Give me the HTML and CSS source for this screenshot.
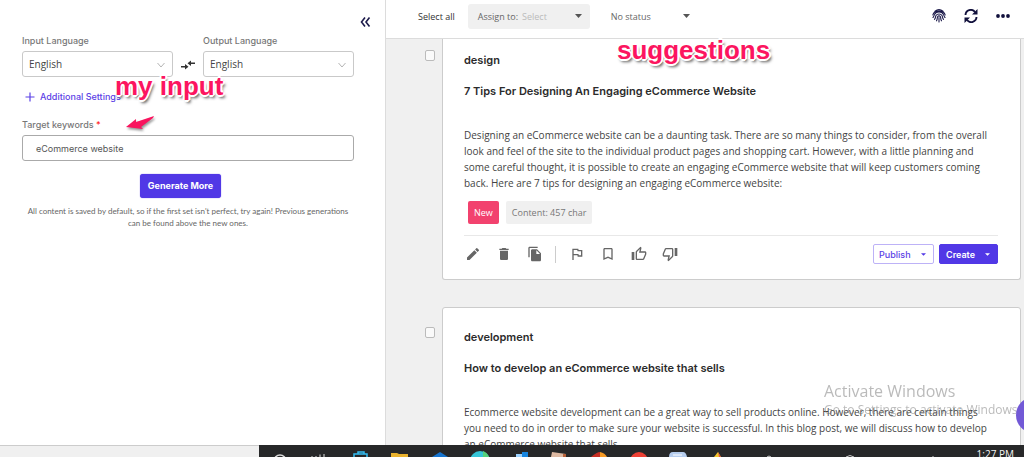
FILE: index.html
```html
<!DOCTYPE html>
<html lang="en">
<head>
<meta charset="utf-8">
<title>Content generator</title>
<link rel="stylesheet" href="styles.css">
</head>
<body>
<div class="screen">
  <div class="app">
    <aside class="sidebar">
      <button class="icon-btn collapse" aria-label="Collapse panel">
        <svg width="12" height="12" viewBox="0 0 12 12" fill="none" stroke="#1d1b4b" stroke-width="1.6"><path d="M6 1.500 2.500 6 6 10.500M10.500 1.500 7 6l3.500 4.500"/></svg>
      </button>
      <form class="form">
        <div class="languages">
          <div class="field">
            <label for="in-lang">Input Language</label>
            <div class="select-box">
              <select id="in-lang"><option>English</option></select>
              <svg class="chevron" width="10" height="6" viewBox="0 0 10 6" fill="none" stroke="#b5b5b5"><path d="m1.500 1 3.500 4 3.500-4"/></svg>
            </div>
          </div>
          <svg class="swap" width="14" height="10" viewBox="0 0 14 10"><path d="M0 6h4V4l3.500 2.750L4 9.500V7.500H0zM14 2.500h-4V.5L6.500 3.250 10 6V4h4z" fill="#333"/></svg>
          <div class="field">
            <label for="out-lang">Output Language</label>
            <div class="select-box">
              <select id="out-lang"><option>English</option></select>
              <svg class="chevron" width="10" height="6" viewBox="0 0 10 6" fill="none" stroke="#b5b5b5"><path d="m1.500 1 3.500 4 3.500-4"/></svg>
            </div>
          </div>
        </div>
        <button type="button" class="additional">
          <svg width="10" height="10" viewBox="0 0 10 10" stroke="#5b41e6" stroke-width="1.200"><path d="M5 .5v9M.5 5h9"/></svg>
          Additional Settings
        </button>
        <label for="keywords">Target keywords <span class="required">*</span></label>
        <input class="keywords" id="keywords" type="text" value="eCommerce website">
        <button type="button" class="generate">Generate More</button>
        <p class="hint">All content is saved by default, so if the first set isn't perfect, try again! Previous generations<br>can be found above the new ones.</p>
      </form>
    </aside>

    <main class="results">
      <header class="toolbar">
        <button class="select-all">Select all</button>
        <div class="assign">
          <label for="assign">Assign to:</label>
          <select id="assign"><option>Select</option></select>
          <svg class="caret" width="7" height="4" viewBox="0 0 7 4"><path d="M0 0h7L3.500 4z" fill="#555"/></svg>
        </div>
        <div class="status">
          <select aria-label="Status"><option>No status</option></select>
          <svg class="caret" width="7" height="4" viewBox="0 0 7 4"><path d="M0 0h7L3.500 4z" fill="#555"/></svg>
        </div>
        <div class="toolbar-icons">
          <button class="icon-btn" aria-label="Fingerprint">
            <svg width="14" height="14" viewBox="0 0 14 14" fill="none" stroke="#1d1b4b" stroke-width="1.100" stroke-linecap="round"><path d="M3 2.200a6.500 6.500 0 0 1 8 0M.8 6C2 .8 12 .8 13.200 6M1 8.500C2 7.500 1.900 6.500 2.500 5.500c1.700-3.300 7.300-3.300 9 0 .6 1 .5 2 1.500 3M2.500 10.300C4 8.500 3.200 7.700 4 6.500c1.300-2 4.700-2 6 0 .8 1.200 0 2 1.500 3.800M4.500 11.800C5.600 10 5 8.500 5.700 7.500c.6-.8 2-.8 2.600 0 .7 1 .1 2.500 1.200 4.300M7 8.500v4.500"/></svg>
          </button>
          <button class="icon-btn" aria-label="Refresh">
            <svg width="14" height="14" viewBox="0 0 14 14"><path d="M1.500 6A5.300 5.300 0 0 1 11 3M12.500 8A5.300 5.300 0 0 1 3 11" fill="none" stroke="#11103c" stroke-width="1.900"/><path d="M13.500 0v5.500H8zM.5 14V8.500H6z" fill="#11103c"/></svg>
          </button>
          <button class="icon-btn" aria-label="More">
            <svg width="14" height="4" viewBox="0 0 14 4" fill="#11103c"><circle cx="2" cy="2" r="1.900"/><circle cx="7" cy="2" r="1.900"/><circle cx="12" cy="2" r="1.900"/></svg>
          </button>
        </div>
      </header>

      <div class="list">
        <div class="item first">
          <input type="checkbox" aria-label="Select design">
          <article class="card">
            <h2>design</h2>
            <h3>7 Tips For Designing An Engaging eCommerce Website</h3>
            <p>Designing an eCommerce website can be a daunting task. There are so many things to consider, from the overall<br>look and feel of the site to the individual product pages and shopping cart. However, with a little planning and<br>some careful thought, it is possible to create an engaging eCommerce website that will keep customers coming<br>back. Here are 7 tips for designing an engaging eCommerce website:</p>
            <div class="tags"><span class="tag new">New</span><span class="tag">Content: 457 char</span></div>
            <footer class="actions">
              <button class="icon-btn" aria-label="Edit"><svg width="16" height="16" viewBox="0 0 24 24"><path d="M3 17.250V21h3.750L17.810 9.940l-3.750-3.750L3 17.250zM20.710 7.040a1 1 0 0 0 0-1.410l-2.340-2.340a1 1 0 0 0-1.410 0l-1.830 1.830 3.750 3.750 1.830-1.830z"/></svg></button>
              <button class="icon-btn" aria-label="Delete"><svg width="16" height="16" viewBox="0 0 24 24"><path d="M6 19c0 1.100.9 2 2 2h8c1.100 0 2-.9 2-2V7H6v12zM19 4h-3.500l-1-1h-5l-1 1H5v2h14V4z"/></svg></button>
              <button class="icon-btn" aria-label="Copy"><svg width="16" height="16" viewBox="0 0 24 24"><path d="M16 1H4c-1.100 0-2 .9-2 2v14h2V3h12V1zm-1 4 6 6v10c0 1.100-.9 2-2 2H7.990C6.890 23 6 22.100 6 21V7c0-1.100.89-2 1.990-2H15zm-1 7h5.500L14 6.500V12z"/></svg></button>
              <span class="divider"></span>
              <button class="icon-btn" aria-label="Flag"><svg width="16" height="16" viewBox="0 0 24 24"><path d="m12.360 6 .4 2H18v6h-3.360l-.4-2H7V6h5.360M14 4H5v17h2v-7h5.600l.4 2h7V6h-5.600L14 4z"/></svg></button>
              <button class="icon-btn" aria-label="Bookmark"><svg width="16" height="16" viewBox="0 0 24 24"><path d="M17 3H7c-1.100 0-2 .9-2 2v16l7-3 7 3V5c0-1.100-.9-2-2-2zm0 15-5-2.180L7 18V5h10v13z"/></svg></button>
              <button class="icon-btn" aria-label="Like"><svg width="16" height="16" viewBox="0 0 24 24"><path d="M9 21h9c.83 0 1.540-.5 1.840-1.220l3.020-7.050c.09-.23.14-.47.14-.73v-2c0-1.100-.9-2-2-2h-6.310l.95-4.570.03-.32c0-.41-.17-.79-.44-1.060L14.170 1 7.580 7.590C7.220 7.950 7 8.450 7 9v10c0 1.100.9 2 2 2zM9 9l4.340-4.340L12 10h9v2l-3 7H9V9zM1 9h4v12H1z"/></svg></button>
              <button class="icon-btn" aria-label="Dislike"><svg width="16" height="16" viewBox="0 0 24 24"><path d="M15 3H6c-.83 0-1.540.5-1.840 1.220l-3.020 7.050c-.09.23-.14.47-.14.730v2c0 1.100.9 2 2 2h6.310l-.95 4.570-.03.32c0 .41.17.79.44 1.060L9.830 23l6.590-6.590c.36-.36.58-.86.58-1.410V5c0-1.100-.9-2-2-2zm0 12-4.340 4.340L12 14H3v-2l3-7h9v10zm4-12h4v12h-4z"/></svg></button>
              <button class="menu-btn publish">Publish <svg width="5" height="3" viewBox="0 0 6 3"><path d="M0 0h6L3 3z"/></svg></button>
              <button class="menu-btn create">Create <svg width="5" height="3" viewBox="0 0 6 3"><path d="M0 0h6L3 3z"/></svg></button>
            </footer>
          </article>
        </div>
        <div class="item">
          <input type="checkbox" aria-label="Select development">
          <article class="card">
            <h2>development</h2>
            <h3>How to develop an eCommerce website that sells</h3>
            <p>Ecommerce website development can be a great way to sell products online. However, there are certain things<br>you need to do in order to make sure your website is successful. In this blog post, we will discuss how to develop<br>an eCommerce website that sells.</p>
          </article>
        </div>
      </div>
    </main>
  </div>

  <div class="bottom">
    <div class="taskbar">
      <svg class="task-icons" width="500" height="12" viewBox="0 0 500 12">
        <circle cx="21" cy="16" r="6" fill="none" stroke="#ddd" stroke-width="1.500"/>
        <path d="M53 12v-1M57 12v-1M61 12V9.500M65 12V9" stroke="#ddd"/>
        <path d="M95 12V9h13v3M99 9V7h6v2" fill="none" stroke="#35bdf2" stroke-width="1.500"/>
        <path d="M132 12V8h6l2 1h9v3z" fill="#eab22d"/>
        <path d="m173 12 8-5 8 5z" fill="#1674cf"/>
        <circle cx="221" cy="16" r="10" fill="#36c5d8"/><path d="M224 6a10 10 0 0 1 6 6h-6z" fill="#55d17b"/>
        <path d="M257 12V9h6V7h6v5z" fill="#1685df"/><path d="M257 12V9h6v3z" fill="#9dd3ff"/>
        <path d="m292 12 1-5 14 2v3z" fill="#ddb9a2"/><path d="m304 9 3 0v3h-3z" fill="#b86138"/>
        <path d="M332 12q6-5 9-5v5z" fill="#c62e22"/><path d="M341 7q5 1 7 5h-7z" fill="#f79a23"/>
        <circle cx="380" cy="16" r="9" fill="#ed4034"/>
        <path d="M410 12q0-5 4-5h10q3 0 4 5z" fill="#b6cdee"/><path d="M414 10h9" stroke="#fff"/>
        <path d="m455 12 4-5 3 5z" fill="#f3c62b"/><path d="m459 7 3 5h-2z" fill="#e35343"/>
      </svg>
      <svg class="tray" width="170" height="12" viewBox="0 0 170 12" fill="none" stroke="#ccc"><path d="M3 12q2-2 4 0M82 12q4-3 8 0M169 12v-1"/></svg>
      <time>1:27 PM</time>
    </div>
  </div>

  <span class="note note-input">my input</span>
  <span class="note note-suggestions">suggestions</span>
  <svg class="arrow" width="32" height="18" viewBox="0 0 32 18"><path d="m2 13 10-8v3l18-6-1 2-12 9 2 2z" fill="#f9155f"/></svg>
  <div class="watermark"><strong>Activate Windows</strong><span>Go to Settings to activate Windows.</span></div>
  <button class="bubble" aria-label="Open chat"></button>
</div>
</body>
</html>
```

FILE: styles.css
```css
* { box-sizing: border-box; }
body { margin: 0; font-family: "Open Sans", "Noto Sans", sans-serif; color: #333; }
button, select, input { font: inherit; color: inherit; margin: 0; }
button { border: 0; background: none; padding: 0; white-space: nowrap; }
svg { display: block; flex: none; }
.screen { position: relative; height: 100vh; overflow: hidden; display: flex; flex-direction: column; }
.app { flex: 1; min-height: 0; display: grid; grid-template-columns: 386fr 638fr; }

.sidebar { border-right: 1px solid #dcdcdc; padding: 16px 14px 0 22px; background: #fff; min-width: 0; }
.icon-btn { display: flex; align-items: center; justify-content: center; }
.collapse { margin-left: auto; }
.form { display: flex; flex-direction: column; padding: 6px 17px 0 0; font-family: Inter, sans-serif; font-size: 9px; line-height: 14px; }
.form label { color: #777; font-weight: 500; }
.languages { display: flex; align-items: flex-end; gap: 8px; }
.field { flex: 1; display: flex; flex-direction: column; gap: 3px; min-width: 0; }
.swap { margin-bottom: 7px; }
.select-box { position: relative; }
.select-box select { width: 100%; height: 26px; padding: 0 6px; appearance: none; background: #fff; border: 1px solid #c9c9c9; border-radius: 3px; font-family: "Open Sans", sans-serif; font-size: 10px; color: #444; }
.chevron { position: absolute; right: 7px; top: 11px; }
.additional { align-self: flex-start; display: flex; align-items: center; gap: 5px; margin: 13px 0 14px 3px; color: #5b41e6; font-weight: 500; }
.required { color: #f22; }
.keywords { width: 100%; height: 26px; margin-top: 3px; padding: 0 13px; border: 1px solid #aaa; border-radius: 3px; color: #555; }
.generate { align-self: center; margin: 13px 15px 0 0; padding: 0 8px; height: 24px; border-radius: 3px; background: #5138e6; color: #fff; font-weight: 700; box-shadow: 0 0 1px #5138e6; }
.hint { margin: 7px 0 0; font-family: Lato, sans-serif; font-size: 8px; line-height: 12px; text-align: center; color: #666; }

.results { display: flex; flex-direction: column; min-width: 0; min-height: 0; background: #f0f0f0; }
.toolbar { flex: none; display: flex; align-items: center; height: 39px; padding: 0 14px 6px 32px; border-bottom: 1px solid #dcdcdc; background: #fff; font-size: 9px; }
.toolbar select { appearance: none; border: 0; background: transparent; padding: 0; flex: 1; min-width: 0; }
.assign { display: flex; align-items: center; gap: 4px; width: 122px; height: 25px; margin-left: 13px; padding: 0 8px 0 10px; background: #f0f0f0; border-radius: 3px; color: #666; }
.assign select { color: #bbb; }
.status { display: flex; align-items: center; width: 79px; margin-left: 21px; color: #666; }
.toolbar-icons { display: flex; align-items: center; gap: 18px; margin-left: auto; }

.list { flex: 1; min-height: 0; overflow: hidden; padding: 0 3px 0 39px; }
.item { display: flex; align-items: flex-start; gap: 7px; margin-bottom: 27px; }
.item input { appearance: none; flex: none; width: 10px; height: 11px; margin-top: 20px; border: 1px solid #bbb; border-radius: 2px; background: #fafafa; }
.first input { margin-top: 11px; }
.card { flex: 1; min-width: 0; padding: 21px 22px 15px 21px; background: #fff; border: 1px solid #ccc; border-radius: 3px; }
.first .card { border-top: 0; border-radius: 0 0 3px 3px; padding-top: 13px; }
.card h2, .card h3 { margin: 0; font: 600 11px/16px Inter, sans-serif; color: #2b2b2b; }
.card h3 { margin-top: 15px; }
.card p { margin: 28px 0 0; font-size: 10px; line-height: 16px; color: #444; white-space: nowrap; }
.tags { display: flex; gap: 7px; margin: 10px 4px 0; }
.tag { padding: 0 6px; font-size: 9px; line-height: 23px; border-radius: 2px; background: #f0f0f0; color: #777; }
.tag.new { background: #f2426e; color: #fff; }
.actions { display: flex; align-items: center; gap: 14px; margin-top: 11px; padding-top: 8px; border-top: 1px solid #e8e8e8; fill: #666; }
.actions .icon-btn { width: 17px; }
.divider { width: 1px; height: 17px; background: #ccc; margin: 0 -2px 0 -2px; }
.menu-btn { display: flex; align-items: center; justify-content: space-between; width: 59px; height: 20px; padding: 0 7px 0 6px; border: 1px solid #bdb2f7; border-radius: 2px; font-family: Inter, sans-serif; font-size: 9px; }
.publish { width: 61px; margin-left: auto; padding-left: 5px; color: #5b41e6; fill: #5138e6; font-weight: 500; }
.create { margin-left: -9px; background: #5138e6; border-color: #5138e6; color: #fff; fill: #fff; font-weight: 600; }

.bottom { flex: none; height: 12px; padding-left: 259px; background: #f0f0f0; border-top: 1px solid #ccc; }
.taskbar { display: flex; height: 12px; margin-top: -1px; background: #272829; overflow: hidden; }
.tray { margin-left: 5px; }
.taskbar time { margin: 2px 10px 0 auto; font-size: 10px; line-height: 14px; color: #f4f4f4; white-space: nowrap; }

.note { position: absolute; font: 700 26px/30px "Liberation Sans", Arial, sans-serif; color: #fc155f; white-space: nowrap; text-shadow: -2px 0 #fff, 2px 0 #fff, 0 -2px #fff, 0 2px #fff, -1px -1px #fff, 1px 1px #fff, 2px 3px 3px #555; }
.note-input { left: 115px; top: 71px; }
.note-suggestions { left: 617px; top: 35px; }
.arrow { position: absolute; left: 124px; top: 114px; filter: drop-shadow(1px 2px 1px #999); }
.watermark { position: absolute; left: 824px; top: 381px; display: flex; flex-direction: column; color: #777; opacity: .5; white-space: nowrap; pointer-events: none; }
.watermark strong { font-weight: 400; font-size: 16px; line-height: 20px; }
.watermark span { font-size: 12px; line-height: 17px; }
.bubble { position: absolute; left: 1016px; top: 397px; width: 36px; height: 36px; border-radius: 50%; background: #7259d6; }
```
